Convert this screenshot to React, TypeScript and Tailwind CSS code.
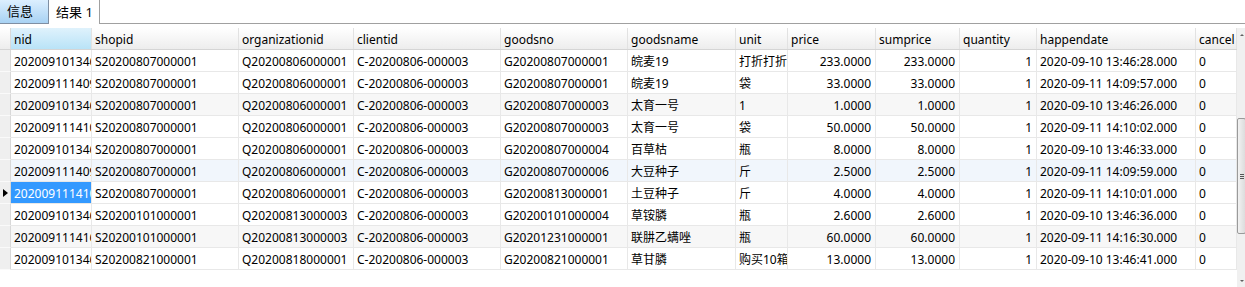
import React from 'react'

type Row = {
  nid: string
  shopid: string
  org: string
  clientid: string
  goodsno: string
  goodsname: string
  unit: string
  price: string
  sumprice: string
  quantity: string
  happendate: string
  cancel: string
}

const rows: Row[] = [
  { nid: '20200910134628001', shopid: 'S20200807000001', org: 'Q20200806000001', clientid: 'C-20200806-000003', goodsno: 'G20200807000001', goodsname: '皖麦19', unit: '打折打折', price: '233.0000', sumprice: '233.0000', quantity: '1', happendate: '2020-09-10 13:46:28.000', cancel: '0' },
  { nid: '20200911140957001', shopid: 'S20200807000001', org: 'Q20200806000001', clientid: 'C-20200806-000003', goodsno: 'G20200807000001', goodsname: '皖麦19', unit: '袋', price: '33.0000', sumprice: '33.0000', quantity: '1', happendate: '2020-09-11 14:09:57.000', cancel: '0' },
  { nid: '20200910134626001', shopid: 'S20200807000001', org: 'Q20200806000001', clientid: 'C-20200806-000003', goodsno: 'G20200807000003', goodsname: '太育一号', unit: '1', price: '1.0000', sumprice: '1.0000', quantity: '1', happendate: '2020-09-10 13:46:26.000', cancel: '0' },
  { nid: '20200911141002001', shopid: 'S20200807000001', org: 'Q20200806000001', clientid: 'C-20200806-000003', goodsno: 'G20200807000003', goodsname: '太育一号', unit: '袋', price: '50.0000', sumprice: '50.0000', quantity: '1', happendate: '2020-09-11 14:10:02.000', cancel: '0' },
  { nid: '20200910134633001', shopid: 'S20200807000001', org: 'Q20200806000001', clientid: 'C-20200806-000003', goodsno: 'G20200807000004', goodsname: '百草枯', unit: '瓶', price: '8.0000', sumprice: '8.0000', quantity: '1', happendate: '2020-09-10 13:46:33.000', cancel: '0' },
  { nid: '20200911140959001', shopid: 'S20200807000001', org: 'Q20200806000001', clientid: 'C-20200806-000003', goodsno: 'G20200807000006', goodsname: '大豆种子', unit: '斤', price: '2.5000', sumprice: '2.5000', quantity: '1', happendate: '2020-09-11 14:09:59.000', cancel: '0' },
  { nid: '20200911141001001', shopid: 'S20200807000001', org: 'Q20200806000001', clientid: 'C-20200806-000003', goodsno: 'G20200813000001', goodsname: '土豆种子', unit: '斤', price: '4.0000', sumprice: '4.0000', quantity: '1', happendate: '2020-09-11 14:10:01.000', cancel: '0' },
  { nid: '20200910134636001', shopid: 'S20200101000001', org: 'Q20200813000003', clientid: 'C-20200806-000003', goodsno: 'G20200101000004', goodsname: '草铵膦', unit: '瓶', price: '2.6000', sumprice: '2.6000', quantity: '1', happendate: '2020-09-10 13:46:36.000', cancel: '0' },
  { nid: '20200911141630001', shopid: 'S20200101000001', org: 'Q20200813000003', clientid: 'C-20200806-000003', goodsno: 'G20201231000001', goodsname: '联肼乙螨唑', unit: '瓶', price: '60.0000', sumprice: '60.0000', quantity: '1', happendate: '2020-09-11 14:16:30.000', cancel: '0' },
  { nid: '20200910134641001', shopid: 'S20200821000001', org: 'Q20200818000001', clientid: 'C-20200806-000003', goodsno: 'G20200821000001', goodsname: '草甘膦', unit: '购买10箱送1箱', price: '13.0000', sumprice: '13.0000', quantity: '1', happendate: '2020-09-10 13:46:41.000', cancel: '0' },
]

// widths include the 1px right border
const cols: { key: keyof Row; label: string; w: string; right?: boolean }[] = [
  { key: 'nid', label: 'nid', w: 'w-[81px]' },
  { key: 'shopid', label: 'shopid', w: 'w-[147px]' },
  { key: 'org', label: 'organizationid', w: 'w-[115px]' },
  { key: 'clientid', label: 'clientid', w: 'w-[147px]' },
  { key: 'goodsno', label: 'goodsno', w: 'w-[127px]' },
  { key: 'goodsname', label: 'goodsname', w: 'w-[108px]' },
  { key: 'unit', label: 'unit', w: 'w-[52px]' },
  { key: 'price', label: 'price', w: 'w-[88px]', right: true },
  { key: 'sumprice', label: 'sumprice', w: 'w-[84px]', right: true },
  { key: 'quantity', label: 'quantity', w: 'w-[77px]', right: true },
  { key: 'happendate', label: 'happendate', w: 'w-[159px]' },
  { key: 'cancel', label: 'cancel', w: 'w-[41px]' },
]

function rowBg(i: number) {
  if (i === 5) return 'bg-[#f1f6fc]'
  if (i === 2 || i === 8) return 'bg-[#f7f7f7]'
  return 'bg-white'
}

export default function App() {
  return (
    <div className="h-[287px] w-[1245px] overflow-hidden bg-white text-[12px] leading-none text-black [font-family:'Noto_Sans','Noto_Sans_CJK_SC',sans-serif]">
      {/* Tabs */}
      <div className="flex h-[24px] items-stretch">
        <div className="flex w-[49px] items-center border-r border-b border-[#7f8fa3] bg-gradient-to-b from-[#dcefff] to-[#a8d2f3] pl-[7px] text-[13px]">
          信息
        </div>
        <div className="flex w-[51px] items-center border-r border-[#a0a0a0] bg-white pl-[7px] text-[13px]">
          结果 1
        </div>
        <div className="flex-1 border-b border-[#a0a0a0]" />
      </div>

      <div className="mt-[4px] flex">
        <div className="w-[1237px]">
          {/* Header */}
          <div className="flex h-[22px] border-b border-[#d5d5d5] bg-gradient-to-b from-[#ffffff] to-[#ededed]">
            <div className="w-[11px] border-r border-[#dadada]" />
            {cols.map((c) => (
              <div
                key={c.key}
                className={`${c.w} flex shrink-0 items-center overflow-hidden whitespace-nowrap border-r border-[#e2e2e2] pt-[3px] pl-[3px] ${
                  c.key === 'nid' ? 'bg-gradient-to-b from-[#dff2fc] to-[#b9e3f7]' : ''
                }`}
              >
                {c.label}
              </div>
            ))}
          </div>

          {/* Rows */}
          {rows.map((r, i) => (
            <div key={i} className={`flex h-[22px] ${rowBg(i)}`}>
              <div className="flex w-[11px] shrink-0 items-center border-r border-b border-r-[#d8d8d8] border-b-[#fafafa] bg-[#efefef]">
                {i === 6 && (
                  <svg width="8" height="10" viewBox="0 0 8 10" className="ml-[2px]">
                    <path d="M1 1 L6 5 L1 9 Z" fill="#000" />
                  </svg>
                )}
              </div>
              {cols.map((c) => {
                const selected = i === 6 && c.key === 'nid'
                return (
                  <div
                    key={c.key}
                    className={`${c.w} flex shrink-0 items-center overflow-hidden whitespace-nowrap border-r border-b border-[#e8e8e8] pt-[3px] ${
                      c.right ? 'justify-end pr-[4px]' : 'pl-[3px]'
                    } ${selected ? 'bg-[#3399ff] text-white' : ''}`}
                  >
                    {r[c.key]}
                  </div>
                )
              })}
            </div>
          ))}
        </div>

        {/* Scrollbar */}
        <div className="relative h-[259px] w-[8px] bg-[#f0f0f0]">
          <svg width="8" height="8" viewBox="0 0 8 8" className="absolute left-[1px] top-[3px]">
            <path d="M2 5 L4 3 L6 5 Z" fill="#606060" />
          </svg>
          <div className="absolute left-0 top-[90px] flex h-[116px] w-[9px] flex-col items-center justify-center gap-[1px] rounded-[2px] border border-[#9a9a9a] bg-gradient-to-r from-[#f2f2f2] to-[#dcdcdc]">
            <div className="h-px w-[4px] bg-[#555]" />
            <div className="h-px w-[4px] bg-[#555]" />
            <div className="h-px w-[4px] bg-[#555]" />
          </div>
          <svg width="8" height="8" viewBox="0 0 8 8" className="absolute bottom-[2px] left-[1px]">
            <path d="M2 3 L4 5 L6 3 Z" fill="#606060" />
          </svg>
        </div>
      </div>
    </div>
  )
}
